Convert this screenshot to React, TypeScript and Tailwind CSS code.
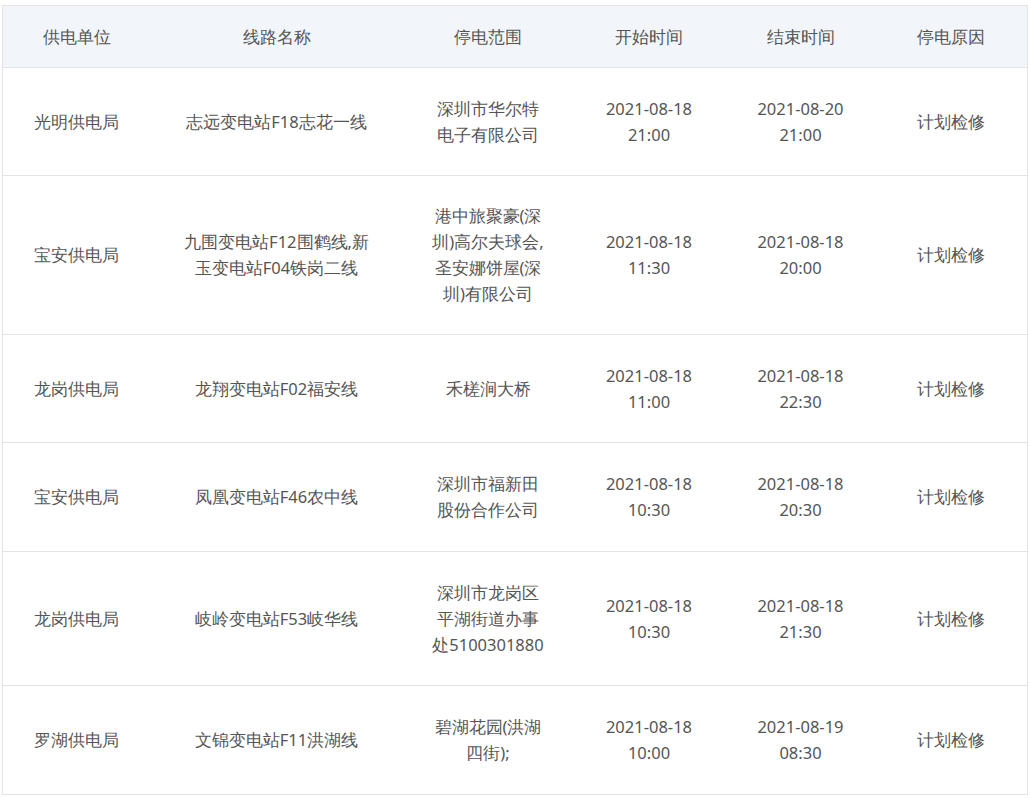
const colCls = ["w-[147px]", "w-[253px]", "w-[170px]", "w-[152px]", "w-[151px]", "w-[149px]"];
const heads = ["供电单位", "线路名称", "停电范围", "开始时间", "结束时间", "停电原因"];
const rows: [string, string[], string[], string[], string[], string, string][] = [
  ["光明供电局", ["志远变电站F18志花一线"], ["深圳市华尔特", "电子有限公司"], ["2021-08-18", "21:00"], ["2021-08-20", "21:00"], "计划检修", "h-[108px]"],
  ["宝安供电局", ["九围变电站F12围鹤线,新", "玉变电站F04铁岗二线"], ["港中旅聚豪(深", "圳)高尔夫球会,", "圣安娜饼屋(深", "圳)有限公司"], ["2021-08-18", "11:30"], ["2021-08-18", "20:00"], "计划检修", "h-[159px]"],
  ["龙岗供电局", ["龙翔变电站F02福安线"], ["禾槎涧大桥"], ["2021-08-18", "11:00"], ["2021-08-18", "22:30"], "计划检修", "h-[108px]"],
  ["宝安供电局", ["凤凰变电站F46农中线"], ["深圳市福新田", "股份合作公司"], ["2021-08-18", "10:30"], ["2021-08-18", "20:30"], "计划检修", "h-[109px]"],
  ["龙岗供电局", ["岐岭变电站F53岐华线"], ["深圳市龙岗区", "平湖街道办事", "处5100301880"], ["2021-08-18", "10:30"], ["2021-08-18", "21:30"], "计划检修", "h-[134px]"],
  ["罗湖供电局", ["文锦变电站F11洪湖线"], ["碧湖花园(洪湖", "四街);"], ["2021-08-18", "10:00"], ["2021-08-19", "08:30"], "计划检修", "h-[109px]"],
];

function Cell({ c, lines }: { c: string; lines: string[] }) {
  return (
    <div className={`${c} flex flex-col items-center justify-center text-center leading-[26px] shrink-0`}>
      {lines.map((l, i) => <div key={i}>{l}</div>)}
    </div>
  );
}

export default function App() {
  return (
    <div className="bg-white w-[1030px] h-[798px] pt-[5px] pl-[2px] text-[16.5px] text-[#555] font-['Microsoft_YaHei','Noto_Sans_CJK_SC',sans-serif]">
      <div className="w-[1026px] border border-[#e3e3e3] border-b-0">
        <div className="flex h-[62px] bg-[#f2f6fa] border-b border-[#e3e3e3]">
          {heads.map((h, i) => <Cell key={i} c={colCls[i]} lines={[h]} />)}
        </div>
        {rows.map((r, i) => (
          <div key={i} className={`flex border-b border-[#e3e3e3] ${r[6]}`}>
            <Cell c={colCls[0]} lines={[r[0]]} />
            <Cell c={colCls[1]} lines={r[1]} />
            <Cell c={colCls[2]} lines={r[2]} />
            <Cell c={colCls[3]} lines={r[3]} />
            <Cell c={colCls[4]} lines={r[4]} />
            <Cell c={colCls[5]} lines={[r[5]]} />
          </div>
        ))}
      </div>
    </div>
  );
}
